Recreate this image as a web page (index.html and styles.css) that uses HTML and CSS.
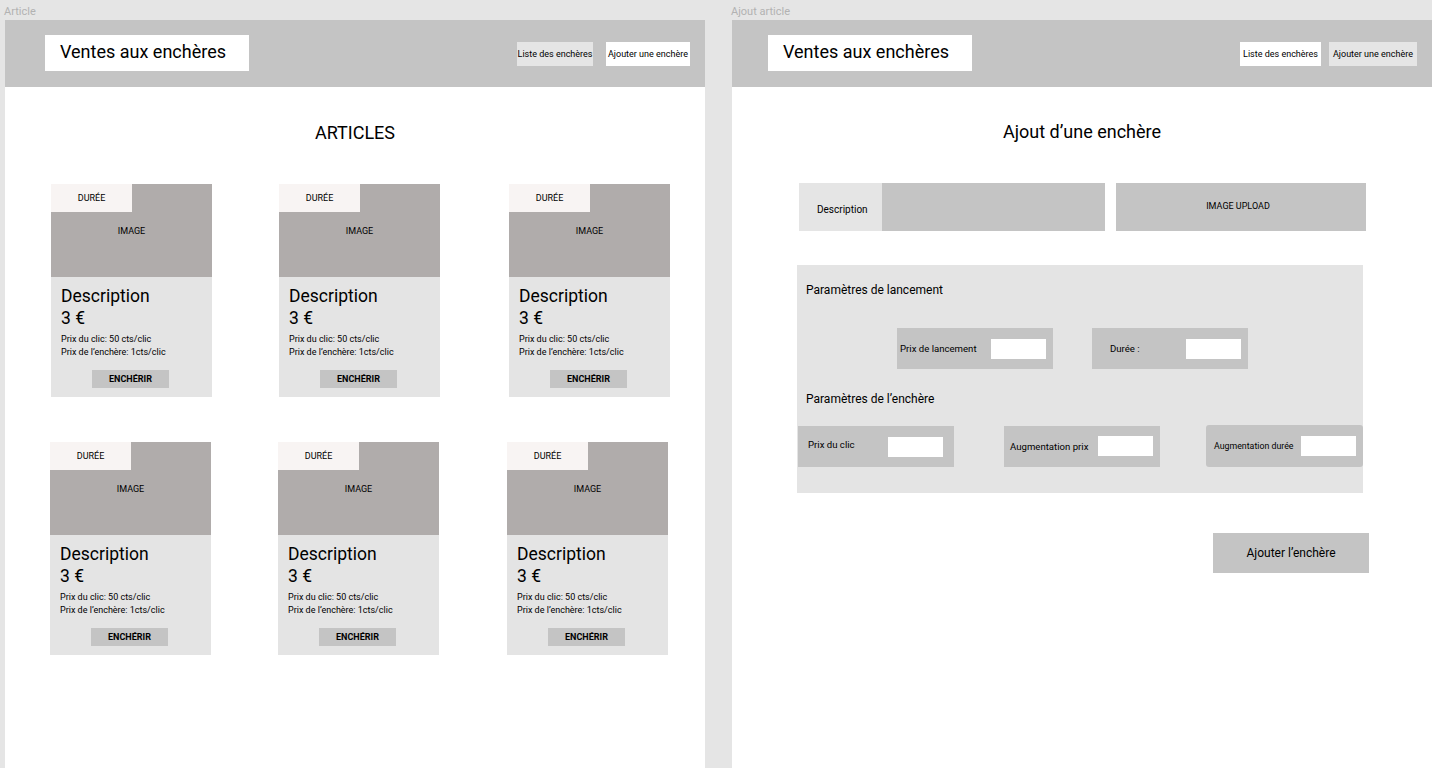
FILE: index.html
```html
<!DOCTYPE html>
<html lang="fr">
<head>
<meta charset="utf-8">
<title>Ventes aux enchères</title>
<link rel="stylesheet" href="styles.css">
</head>
<body>
<div class="canvas">
  <section class="board">
    <div class="board-label">Article</div>
    <div class="frame">
      <header class="topbar">
        <div class="logo">Ventes aux enchères</div>
        <nav class="nav nav-a">
          <span class="nav-btn grey w76">Liste des enchères</span>
          <span class="nav-btn white w84">Ajouter une enchère</span>
        </nav>
      </header>
      <h1 class="page-title">ARTICLES</h1>
      <div class="cards">
        <article class="card">
          <div class="card-img"><span class="duree">DURÉE</span><span class="img-label">IMAGE</span></div>
          <div class="card-body">
            <div class="desc">Description</div>
            <div class="price">3 €</div>
            <div class="meta">Prix du clic: 50 cts/clic</div>
            <div class="meta">Prix de l’enchère: 1cts/clic</div>
            <button class="bid">ENCHÉRIR</button>
          </div>
        </article>
        <article class="card">
          <div class="card-img"><span class="duree">DURÉE</span><span class="img-label">IMAGE</span></div>
          <div class="card-body">
            <div class="desc">Description</div>
            <div class="price">3 €</div>
            <div class="meta">Prix du clic: 50 cts/clic</div>
            <div class="meta">Prix de l’enchère: 1cts/clic</div>
            <button class="bid">ENCHÉRIR</button>
          </div>
        </article>
        <article class="card">
          <div class="card-img"><span class="duree">DURÉE</span><span class="img-label">IMAGE</span></div>
          <div class="card-body">
            <div class="desc">Description</div>
            <div class="price">3 €</div>
            <div class="meta">Prix du clic: 50 cts/clic</div>
            <div class="meta">Prix de l’enchère: 1cts/clic</div>
            <button class="bid">ENCHÉRIR</button>
          </div>
        </article>
        <article class="card row2">
          <div class="card-img"><span class="duree">DURÉE</span><span class="img-label">IMAGE</span></div>
          <div class="card-body">
            <div class="desc">Description</div>
            <div class="price">3 €</div>
            <div class="meta">Prix du clic: 50 cts/clic</div>
            <div class="meta">Prix de l’enchère: 1cts/clic</div>
            <button class="bid">ENCHÉRIR</button>
          </div>
        </article>
        <article class="card row2 shift2">
          <div class="card-img"><span class="duree">DURÉE</span><span class="img-label">IMAGE</span></div>
          <div class="card-body">
            <div class="desc">Description</div>
            <div class="price">3 €</div>
            <div class="meta">Prix du clic: 50 cts/clic</div>
            <div class="meta">Prix de l’enchère: 1cts/clic</div>
            <button class="bid">ENCHÉRIR</button>
          </div>
        </article>
        <article class="card row2 shift2">
          <div class="card-img"><span class="duree">DURÉE</span><span class="img-label">IMAGE</span></div>
          <div class="card-body">
            <div class="desc">Description</div>
            <div class="price">3 €</div>
            <div class="meta">Prix du clic: 50 cts/clic</div>
            <div class="meta">Prix de l’enchère: 1cts/clic</div>
            <button class="bid">ENCHÉRIR</button>
          </div>
        </article>
      </div>
    </div>
  </section>

  <section class="board">
    <div class="board-label">Ajout article</div>
    <div class="frame">
      <header class="topbar topbar-b">
        <div class="logo">Ventes aux enchères</div>
        <nav class="nav nav-b">
          <span class="nav-btn white w81">Liste des enchères</span>
          <span class="nav-btn grey w88">Ajouter une enchère</span>
        </nav>
      </header>
      <h1 class="page-title title-b">Ajout d’une enchère</h1>
      <div class="form">
        <div class="top-row">
          <div class="desc-field">
            <span class="desc-label">Description</span>
            <span class="desc-input"></span>
          </div>
          <div class="upload">IMAGE UPLOAD</div>
        </div>
        <div class="panel">
          <h2 class="panel-title">Paramètres de lancement</h2>
          <div class="param-row row-launch">
            <div class="param pl-3"><span class="param-label">Prix de lancement</span><span class="field"></span></div>
            <div class="param pl-18"><span class="param-label">Durée :</span><span class="field"></span></div>
          </div>
          <h2 class="panel-title t2">Paramètres de l’enchère</h2>
          <div class="param-row row-bid">
            <div class="param pl-10 pr-11"><span class="param-label lift">Prix du clic</span><span class="field"></span></div>
            <div class="param pl-6 field-up"><span class="param-label">Augmentation prix</span><span class="field"></span></div>
            <div class="param pl-8 rounded up"><span class="param-label small">Augmentation durée</span><span class="field"></span></div>
          </div>
        </div>
        <button class="submit">Ajouter l’enchère</button>
      </div>
    </div>
  </section>
</div>
</body>
</html>
```

FILE: styles.css
```css
* { box-sizing: border-box; }

html, body {
  margin: 0;
  padding: 0;
  height: 768px;
  overflow: hidden;
  background: #e5e5e5;
  font-family: Roboto, "Liberation Sans", Arial, sans-serif;
  color: #000;
}

.canvas {
  display: flex;
  gap: 27px;
  padding-left: 5px;
  height: 768px;
}

.board {
  width: 700px;
  display: flex;
  flex-direction: column;
}

.board-label {
  height: 20px;
  font-size: 11px;
  line-height: 24px;
  color: #b2b2b2;
  margin-left: -1px;
}

.frame {
  flex: 1;
  background: #fff;
}

/* Header */
.topbar {
  height: 67px;
  background: #c4c4c4;
  display: flex;
  align-items: center;
  padding: 0 15px 0 40px;
}
.topbar-b { padding-left: 36px; }

.logo {
  width: 204px;
  height: 36px;
  background: #fff;
  font-size: 18px;
  line-height: 34px;
  padding-left: 15px;
  margin-top: -1px;
}

.nav {
  margin-left: auto;
  display: flex;
  align-items: center;
  margin-top: 1px;
}
.nav-a { gap: 13px; }
.nav-b { gap: 8px; }

.nav-btn {
  height: 24px;
  font-size: 9px;
  line-height: 24px;
  text-align: center;
  white-space: nowrap;
}
.nav-btn.grey { background: #e5e5e5; }
.nav-btn.white { background: #fff; }
.w76 { width: 76px; }
.w84 { width: 84px; }
.w81 { width: 81px; }
.w88 { width: 88px; }

/* Title */
.page-title {
  margin: 35px 0 0;
  text-align: center;
  font-size: 18px;
  line-height: 22px;
  font-weight: 400;
}
.title-b { margin-top: 34px; }

/* Cards */
.cards {
  display: grid;
  grid-template-columns: repeat(3, 161px);
  column-gap: 68px;
  row-gap: 45px;
  margin-top: 40px;
  padding-left: 46px;
}
.card:nth-child(2) { margin-left: -1px; }
.card.row2 { margin-left: -1px; }
.card.row2.shift2 { margin-left: -2px; }

.card {
  width: 161px;
  height: 213px;
  display: flex;
  flex-direction: column;
  background: #e4e4e4;
}

.card-img {
  height: 93px;
  background: #b0acab;
  position: relative;
  display: flex;
  align-items: center;
  justify-content: center;
}
.duree {
  position: absolute;
  left: 0;
  top: 0;
  width: 81px;
  height: 28px;
  background: #f8f4f3;
  font-size: 9px;
  line-height: 28px;
  text-align: center;
}
.img-label {
  font-size: 9px;
  line-height: 12px;
}

.card-body {
  flex: 1;
  padding: 8px 10px 0;
  display: flex;
  flex-direction: column;
}
.desc {
  font-size: 17.5px;
  line-height: 22px;
}
.price {
  font-size: 17.5px;
  line-height: 22px;
  margin-bottom: 4px;
}
.meta {
  font-size: 9px;
  line-height: 13px;
}
.bid {
  width: 77px;
  height: 18px;
  margin: 11px 0 0 31px;
  padding: 0;
  border: 0;
  background: #c4c4c4;
  font-family: inherit;
  font-size: 9px;
  font-weight: 700;
  color: #000;
}

/* Form */
.form {
  display: flex;
  flex-direction: column;
  padding-left: 65px;
  margin-top: 40px;
}
.top-row {
  display: flex;
  gap: 11px;
  margin-left: 2px;
}
.desc-field {
  width: 306px;
  height: 48px;
  display: flex;
  background: #c4c4c4;
}
.desc-label {
  width: 83px;
  background: #e5e5e5;
  font-size: 10px;
  line-height: 12px;
  padding: 21px 0 0 18px;
}
.desc-input { flex: 1; }
.upload {
  width: 250px;
  height: 48px;
  background: #c4c4c4;
  font-size: 9px;
  line-height: 12px;
  text-align: center;
  padding-top: 17px;
  padding-right: 6px;
}

.panel {
  width: 566px;
  height: 228px;
  margin-top: 34px;
  background: #e4e4e4;
  padding-top: 17px;
}
.panel-title {
  margin: 0;
  padding-left: 9px;
  font-size: 12px;
  line-height: 16px;
  font-weight: 400;
}
.panel-title.t2 { margin-top: 22px; }

.param-row { display: flex; }
.row-launch {
  margin-top: 30px;
  padding-left: 100px;
  gap: 39px;
}
.row-bid {
  margin-top: 19px;
  padding-left: 1px;
  gap: 50px;
}
.row-bid .param:nth-child(3) { margin-left: -4px; width: 157px; }

.param {
  width: 156px;
  height: 41px;
  background: #c4c4c4;
  display: flex;
  align-items: center;
  padding-right: 7px;
}
.param.rounded { border-radius: 3px; }
.param.up { margin-top: -1px; height: 42px; }
.pl-3 { padding-left: 3px; }
.pl-18 { padding-left: 18px; }
.pl-10 { padding-left: 10px; }
.pl-6 { padding-left: 6px; }
.pl-8 { padding-left: 8px; }
.pr-11 { padding-right: 11px; }

.param-label {
  flex: 1;
  font-size: 9.6px;
  line-height: 12px;
  white-space: nowrap;
}
.param-label.small { font-size: 8.8px; }
.param-label.lift { margin-top: -4px; }
.field {
  width: 55px;
  height: 20px;
  background: #fff;
  flex-shrink: 0;
}
.field-up .field { margin-top: -2px; }

.submit {
  width: 156px;
  height: 40px;
  margin: 40px 0 0 416px;
  padding: 0;
  border: 0;
  background: #c4c4c4;
  font-family: inherit;
  font-size: 12px;
  color: #000;
}
```
